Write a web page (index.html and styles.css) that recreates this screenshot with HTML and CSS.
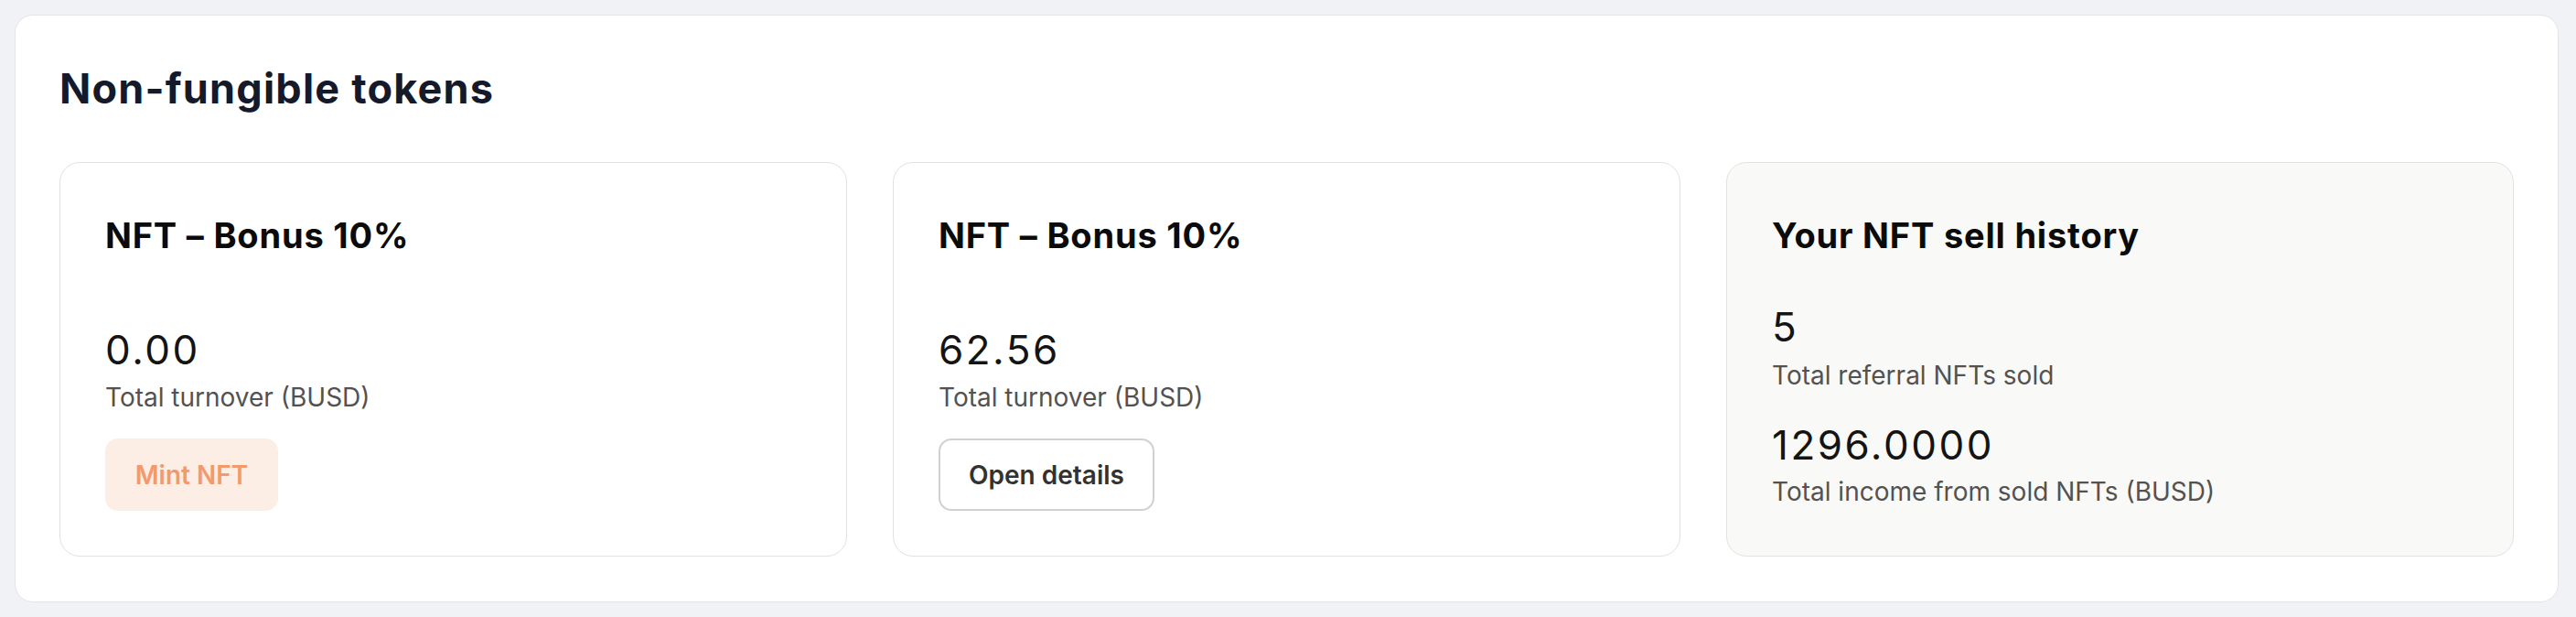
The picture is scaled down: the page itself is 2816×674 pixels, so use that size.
FILE: index.html
```html
<!DOCTYPE html>
<html lang="en">
<head>
<meta charset="utf-8">
<title>Non-fungible tokens</title>
<link rel="stylesheet" href="styles.css">
</head>
<body>
<section class="panel">
  <h1 class="panel-title">Non-fungible tokens</h1>
  <div class="cards">
    <div class="card">
      <h2 class="card-title">NFT – Bonus 10%</h2>
      <div class="value value-first">0.00</div>
      <div class="label">Total turnover (BUSD)</div>
      <button class="btn btn-mint" type="button">Mint NFT</button>
    </div>
    <div class="card">
      <h2 class="card-title">NFT – Bonus 10%</h2>
      <div class="value value-first">62.56</div>
      <div class="label">Total turnover (BUSD)</div>
      <button class="btn btn-outline" type="button">Open details</button>
    </div>
    <div class="card card-muted">
      <h2 class="card-title">Your NFT sell history</h2>
      <div class="value value-history">5</div>
      <div class="label label-tight">Total referral NFTs sold</div>
      <div class="value value-second">1296.0000</div>
      <div class="label label-tight2">Total income from sold NFTs (BUSD)</div>
    </div>
  </div>
</section>
</body>
</html>
```

FILE: styles.css
```css
* { box-sizing: border-box; }

html, body {
  margin: 0;
  background: #f1f2f6;
}

body {
  padding: 16px 19px 16px 16px;
  font-family: Inter, "Noto Sans", sans-serif;
}

.panel {
  background: #ffffff;
  border: 1px solid #e4e4e6;
  border-radius: 20px;
  padding: 53px 48px 49px 48px;
}

.panel-title {
  margin: 0 0 53px 0;
  font-size: 45px;
  line-height: 54px;
  font-weight: 700;
  color: #141a2a;
  letter-spacing: 1.2px;
}

.cards {
  display: grid;
  grid-template-columns: repeat(3, 1fr);
  gap: 50px;
}

.card {
  background: #ffffff;
  border: 1px solid #e2e2e2;
  border-radius: 22px;
  padding: 55px 49px 49px 49px;
  display: flex;
  flex-direction: column;
  align-items: flex-start;
}

.card-muted {
  background: #f9f9f8;
}

.card-title {
  margin: 0;
  font-size: 38px;
  line-height: 49px;
  font-weight: 700;
  color: #0b0b0b;
  letter-spacing: 0.8px;
}

.value {
  font-size: 44px;
  line-height: 53px;
  font-weight: 400;
  color: #141414;
  letter-spacing: 2.5px;
}

.value-first { margin-top: 74px; }
.value-history { margin-top: 49px; }
.value-second { margin-top: 30px; }

.label {
  margin-top: 6px;
  font-size: 28px;
  line-height: 39px;
  color: #545250;
}

.label-tight { margin-top: 7px; }
.label-tight2 { margin-top: 5px; }

.btn {
  margin-top: 25px;
  height: 79px;
  border-radius: 14px;
  font-family: Inter, "Noto Sans", sans-serif;
  font-size: 28px;
  font-weight: 600;
  line-height: 1;
  cursor: pointer;
}

.btn-mint {
  width: 189px;
  background: #fcede5;
  color: #f29a6c;
  border: none;
}

.btn-outline {
  width: 236px;
  background: #ffffff;
  color: #343230;
  border: 2px solid #d3d0cd;
}
```
